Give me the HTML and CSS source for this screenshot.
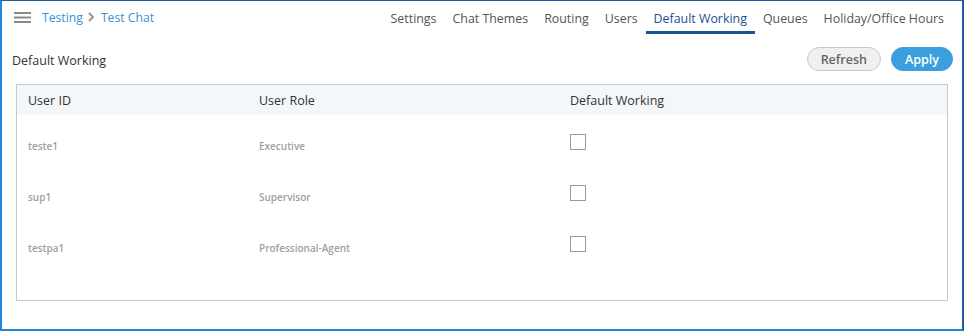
FILE: index.html
```html
<!DOCTYPE html>
<html>
<head>
<meta charset="utf-8">
<link rel="stylesheet" href="styles.css">
</head>
<body>
<div class="frame">
  <header class="topbar">
    <div class="crumbs">
      <svg class="burger" width="17" height="11" viewBox="0 0 17 11"><rect x="0" y="0" width="17" height="2" fill="#8a8a8a"/><rect x="0" y="4.5" width="17" height="2" fill="#8a8a8a"/><rect x="0" y="9" width="17" height="2" fill="#8a8a8a"/></svg>
      <span class="crumb">Testing</span>
      <svg class="chev" width="7" height="10" viewBox="0 0 7 10"><path d="M1 1 L5 5 L1 9" fill="none" stroke="#9a8f86" stroke-width="1.8"/></svg>
      <span class="crumb">Test Chat</span>
    </div>
    <nav class="tabs">
      <span class="tab">Settings</span>
      <span class="tab">Chat Themes</span>
      <span class="tab">Routing</span>
      <span class="tab">Users</span>
      <span class="tab active">Default Working</span>
      <span class="tab">Queues</span>
      <span class="tab">Holiday/Office Hours</span>
    </nav>
  </header>
  <div class="toolbar">
    <h2 class="title">Default Working</h2>
    <div class="actions">
      <button class="btn refresh">Refresh</button>
      <button class="btn apply">Apply</button>
    </div>
  </div>
  <div class="tablebox">
    <div class="row head">
      <div class="c1">User ID</div>
      <div class="c2">User Role</div>
      <div class="c3">Default Working</div>
    </div>
    <div class="tbody">
      <div class="row">
        <div class="c1">teste1</div>
        <div class="c2">Executive</div>
        <div class="c3"><span class="cb"></span></div>
      </div>
      <div class="row">
        <div class="c1">sup1</div>
        <div class="c2">Supervisor</div>
        <div class="c3"><span class="cb"></span></div>
      </div>
      <div class="row">
        <div class="c1">testpa1</div>
        <div class="c2">Professional-Agent</div>
        <div class="c3"><span class="cb"></span></div>
      </div>
    </div>
  </div>
</div>
</body>
</html>
```
FILE: styles.css
```css
html, body { margin: 0; padding: 0; background: #fff; }
body { font-family: "Open Sans", "Liberation Sans", sans-serif; }
.frame {
  box-sizing: border-box;
  width: 964px;
  height: 331px;
  border-top: 1px solid #1d5c9c;
  border-right: 2px solid #1d5c9c;
  border-left: 2px solid #1e88e0;
  border-bottom: 2px solid #1e88e0;
  padding: 0 14px 0 14px;
}
.topbar {
  display: flex;
  justify-content: space-between;
  align-items: flex-start;
  height: 33px;
  margin-left: -2px;
}
.crumbs {
  display: flex;
  align-items: center;
  height: 33px;
}
.burger { margin-right: 11px; margin-top: -1px; }
.crumb { color: #3b8fd6; font-size: 12.2px; margin-top: -1px; }
.chev { margin: -1px 6px 0 5px; }
.tabs { display: flex; height: 33px; margin-right: -4px; }
.tab {
  box-sizing: border-box;
  height: 33px;
  padding: 9px 8px 0 8px;
  font-size: 12.4px;
  color: #555;
  border-bottom: 3px solid transparent;
}
.tab.active { color: #1d4f8a; border-bottom: 3px solid #1a5396; }
.toolbar {
  display: flex;
  justify-content: space-between;
  align-items: center;
  height: 50px;
  margin-left: -4px;
}
.title { font-size: 12.5px; font-weight: normal; color: #333; margin: 2px 0 0 0; }
.actions { display: flex; gap: 10px; margin-right: -5px; margin-top: 0px; }
.btn {
  font-family: "Open Sans", "Liberation Sans", sans-serif;
  font-size: 12.5px;
  font-weight: 600;
  height: 24px;
  border-radius: 12px;
  padding: 0 13px;
  cursor: pointer;
}
.refresh { background: #f0f0f0; border: 1px solid #c8c8c8; color: #666; }
.apply { background: #3a9fdc; border: 1px solid #3a9fdc; color: #fff; padding: 0 13px; }
.tablebox {
  border: 1px solid #c8c8c8;
  height: 217px;
  box-sizing: border-box;
}
.tbody { padding-top: 5px; }
.row { display: flex; height: 51px; align-items: center; font-size: 10px; color: #999; }
.row.head { height: 30px; background: #f4f7fa; font-size: 12.5px; color: #333; }
.c1 { width: 242px; padding-left: 11px; box-sizing: border-box; }
.c2 { width: 311px; }
.c3 { flex: 1; }
.cb {
  display: block;
  width: 14px;
  height: 14px;
  border: 1px solid #999;
  margin-top: -8px;
}
.tbody .c1, .tbody .c2 { font-weight: 600; color: #a0a0a0; }
```
